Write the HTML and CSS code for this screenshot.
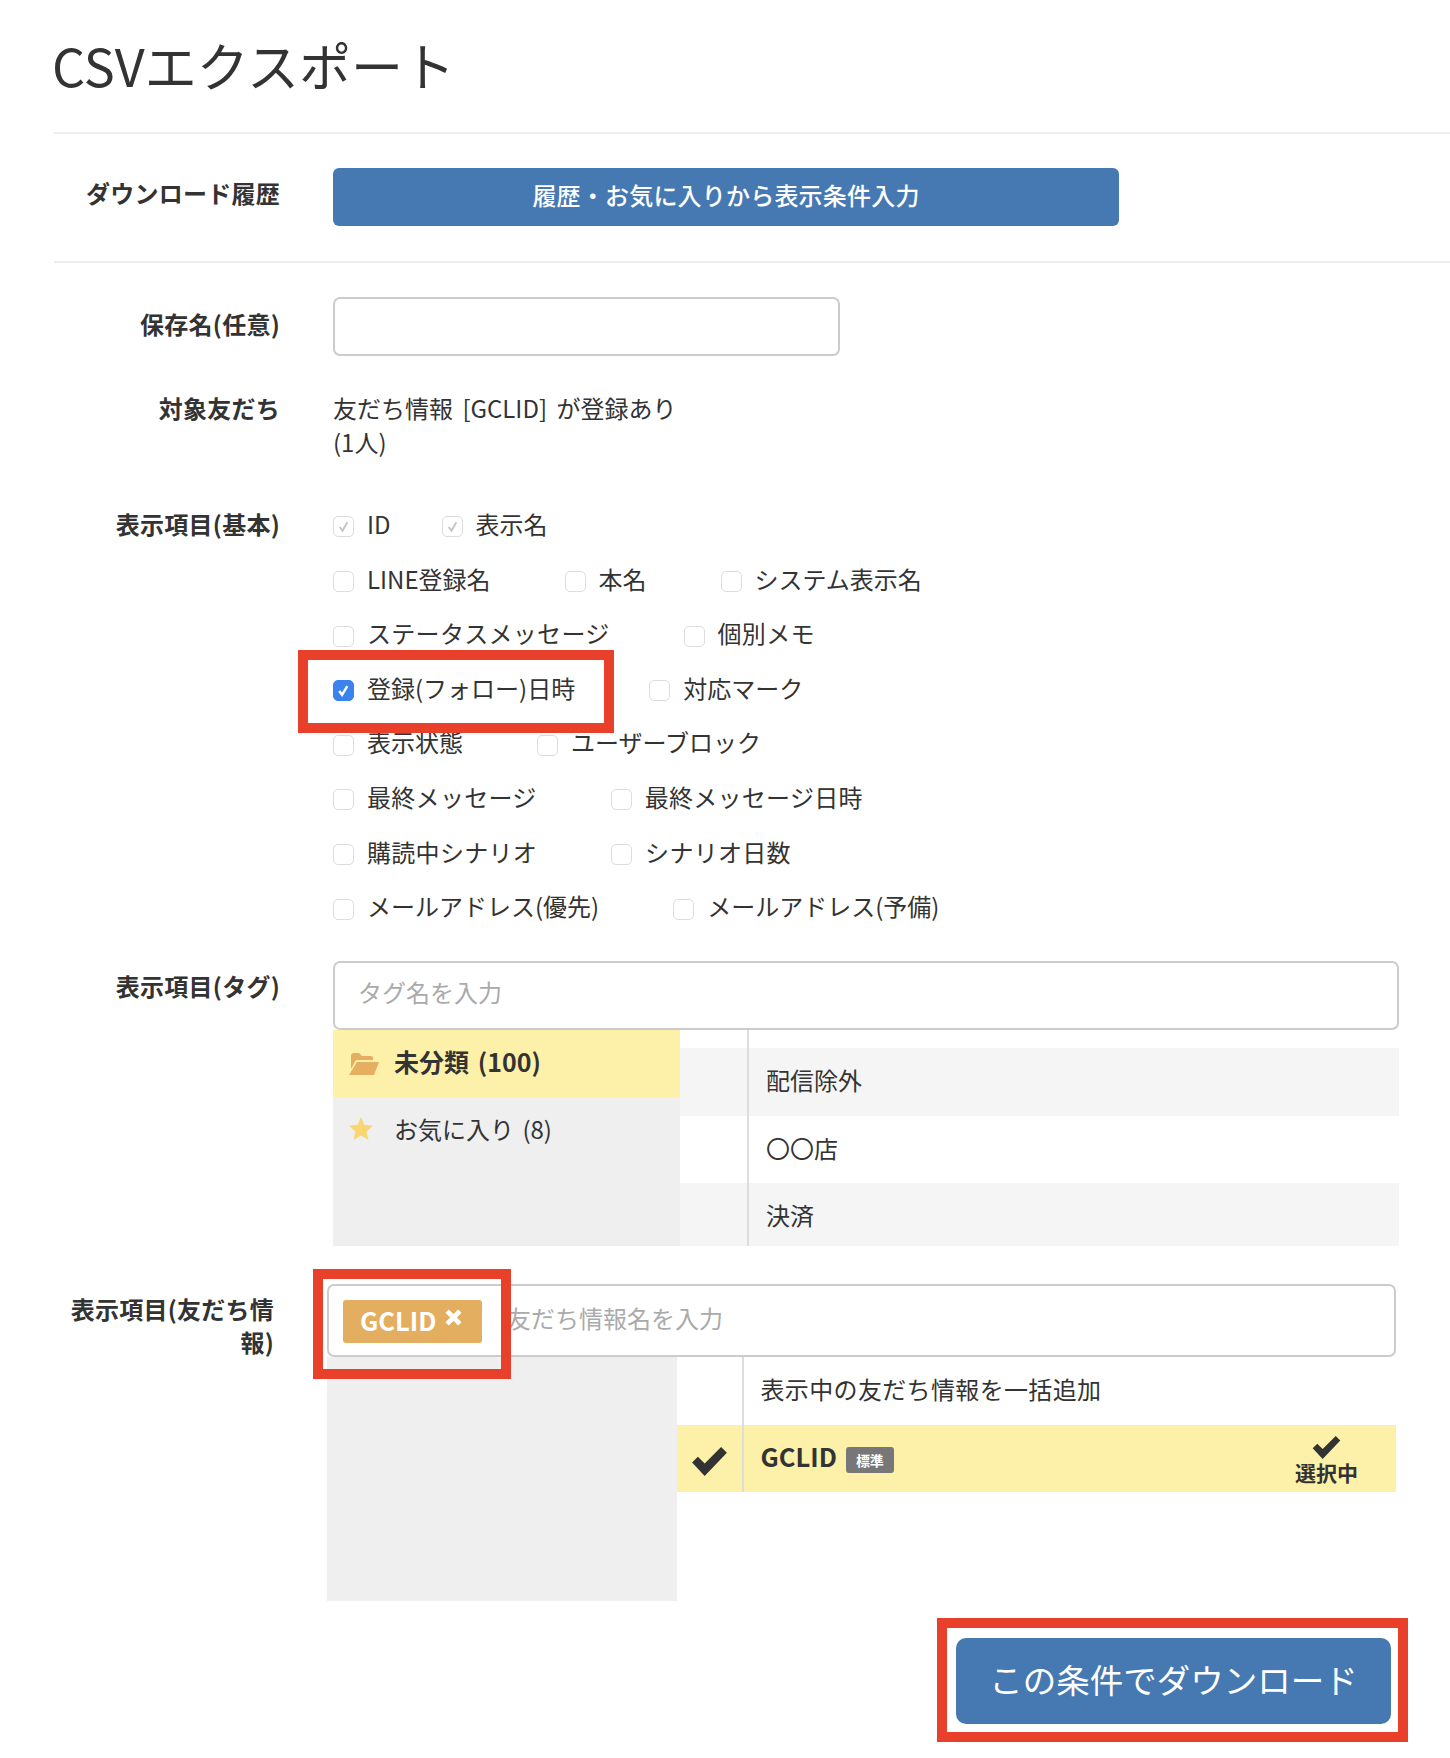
FILE: index.html
```html
<!DOCTYPE html>
<html lang="ja">
<head>
<meta charset="utf-8">
<title>CSVエクスポート</title>
<link rel="stylesheet" href="styles.css">
</head>
<body>
<main class="page">
  <h1 class="title">CSVエクスポート</h1>
  <section class="history">
    <div class="label">ダウンロード履歴</div>
    <button class="btn btn-history" type="button">履歴・お気に入りから表示条件入力</button>
  </section>
  <form class="form">
    <div class="row row-name">
      <label class="label">保存名(任意)</label>
      <input class="input input-name" type="text">
    </div>
    <div class="row row-target">
      <div class="label">対象友だち</div>
      <div class="target-text">友だち情報 [GCLID] が登録あり<br>(1人)</div>
    </div>
    <div class="row row-basic">
      <div class="label">表示項目(基本)</div>
      <div class="checks">
        <div class="check-row tight">
          <span class="check"><span class="cb cb-disabled"><svg viewBox="0 0 20 20"><path d="M6 10.5l3 4 5-9" /></svg></span>ID</span>
          <span class="check"><span class="cb cb-disabled"><svg viewBox="0 0 20 20"><path d="M6 10.5l3 4 5-9" /></svg></span>表示名</span>
        </div>
        <div class="check-row">
          <span class="check"><span class="cb"></span>LINE登録名</span>
          <span class="check"><span class="cb"></span>本名</span>
          <span class="check"><span class="cb"></span>システム表示名</span>
        </div>
        <div class="check-row spaced">
          <span class="check"><span class="cb"></span>ステータスメッセージ</span>
          <span class="check"><span class="cb"></span>個別メモ</span>
        </div>
        <div class="check-row">
          <span class="check"><span class="cb cb-on"><svg viewBox="0 0 20 20"><path d="M5.5 10.5l3 4 5.5-9" /></svg></span>登録(フォロー)日時</span>
          <span class="check"><span class="cb"></span>対応マーク</span>
        </div>
        <div class="check-row">
          <span class="check"><span class="cb"></span>表示状態</span>
          <span class="check"><span class="cb"></span>ユーザーブロック</span>
        </div>
        <div class="check-row spaced">
          <span class="check"><span class="cb"></span>最終メッセージ</span>
          <span class="check"><span class="cb"></span>最終メッセージ日時</span>
        </div>
        <div class="check-row spaced">
          <span class="check"><span class="cb"></span>購読中シナリオ</span>
          <span class="check"><span class="cb"></span>シナリオ日数</span>
        </div>
        <div class="check-row">
          <span class="check"><span class="cb"></span>メールアドレス(優先)</span>
          <span class="check"><span class="cb"></span>メールアドレス(予備)</span>
        </div>
      </div>
    </div>
    <div class="row row-tag">
      <div class="label label-tag">表示項目(タグ)</div>
      <div class="picker">
        <input class="input input-wide" type="text" placeholder="タグ名を入力">
        <div class="panes pane-tag">
          <ul class="side">
            <li class="side-item side-active">
              <svg class="side-icon" viewBox="0 0 30 22"><path d="M2 3a3 3 0 0 1 3-3h5l3 3h9a2 2 0 0 1 2 2v2H7L2 16z" /><path d="M8 9h22l-5 13H0z" /></svg>
              <span>未分類 (100)</span>
            </li>
            <li class="side-item">
              <svg class="side-icon star" viewBox="0 0 24 23"><polygon points="12,0 15.4,8 24,8.8 17.5,14.5 19.5,23 12,18.6 4.5,23 6.5,14.5 0,8.8 8.6,8" /></svg>
              <span>お気に入り (8)</span>
            </li>
          </ul>
          <ul class="list list-tag">
            <li class="list-item">配信除外</li>
            <li class="list-item">〇〇店</li>
            <li class="list-item">決済</li>
          </ul>
        </div>
      </div>
    </div>
    <div class="row row-info">
      <div class="label label-info">表示項目(友だち情報)</div>
      <div class="picker">
        <div class="input tag-field">
          <span class="tag">GCLID<svg class="tag-x" viewBox="0 0 16 16"><path d="M2 2l12 12M14 2L2 14" /></svg></span>
          <input class="tag-input" type="text" placeholder="友だち情報名を入力">
        </div>
        <div class="panes pane-info">
          <div class="side side-info"></div>
          <ul class="list list-info">
            <li class="info-item info-all"><span class="info-mark"></span><span class="info-text">表示中の友だち情報を一括追加</span></li>
            <li class="info-item info-selected">
              <span class="info-mark"><svg class="tick tick-big" viewBox="0 0 36 30"><path d="M0 16l6-6 7 7L30 0l6 6-23 24z" /></svg></span>
              <span class="info-text"><b class="info-name">GCLID</b><span class="badge">標準</span></span>
              <span class="selected-note"><svg class="tick tick-small" viewBox="0 0 36 30"><path d="M0 16l6-6 7 7L30 0l6 6-23 24z" /></svg>選択中</span>
            </li>
          </ul>
        </div>
      </div>
    </div>
    <div class="submit-row">
      <button class="btn btn-submit" type="button">この条件でダウンロード</button>
    </div>
  </form>
  <div class="mark mark-follow"></div>
  <div class="mark mark-tag"></div>
  <div class="mark mark-submit"></div>
</main>
</body>
</html>
```

FILE: styles.css
```css
* { box-sizing: border-box; }
html, body { margin: 0; padding: 0; background: #fff; }
body {
  width: 1450px;
  height: 1758px;
  overflow: hidden;
  color: #333;
  font-family: "Noto Sans CJK JP", "Noto Sans", sans-serif;
  font-size: 24px;
}
ul { list-style: none; margin: 0; padding: 0; }
.page { position: relative; padding-left: 53px; height: 1758px; }

.title {
  margin: 0 0 0 1px;
  padding: 33px 0 0;
  font-size: 52px;
  line-height: 64px;
  font-weight: 400;
  text-indent: -2px;
  border-bottom: 2px solid #eee;
  height: 134px;
}
.history {
  display: flex;
  align-items: center;
  gap: 53px;
  margin-left: 1px;
  padding: 34px 0 35px;
  border-bottom: 2px solid #eee;
  height: 129px;
}
.label {
  flex: none;
  width: 227px;
  text-align: right;
  font-weight: 700;
  line-height: 33px;
  letter-spacing: .25px;
}
.history .label { width: 226px; margin-top: -9px; }
.btn {
  border: 0;
  color: #fff;
  background: #4679b2;
  font-family: inherit;
  border-radius: 6px;
}
.btn-history { width: 786px; height: 58px; padding: 0 0 6px; font-size: 24px; font-weight: 500; letter-spacing: .2px; }

.form { padding-top: 34px; }
.row { display: flex; gap: 53px; }
.input {
  border: 2px solid #ccc;
  border-radius: 7px;
  background: #fff;
  font-family: inherit;
  font-size: 24px;
  outline: none;
}
.input::placeholder { color: #aaa; }
.row-name { align-items: center; height: 59px; }
.row-name .label { margin-top: -7px; }
.input-name { width: 507px; height: 59px; }
.row-target { margin-top: 35px; height: 69px; }
.target-text { line-height: 34px; word-spacing: 4px; }
.row-target .label { line-height: 34px; }

.row-basic { margin-top: 36.7px; height: 438px; }
.row-basic .label { line-height: 54.6px; }
.checks { display: flex; flex-direction: column; }
.check-row { display: flex; height: 54.6px; align-items: center; gap: 74px; }
.check-row.tight { gap: 51px; }
.check-row.spaced { letter-spacing: .3px; }
.check { display: flex; align-items: center; white-space: nowrap; line-height: 34px; }
.cb {
  flex: none;
  width: 21px;
  height: 21px;
  margin: 6px 13px 0 0;
  border: 1.5px solid #dcdcdc;
  border-radius: 5px;
  background: #fff;
  display: block;
}
.cb svg { display: block; width: 100%; height: 100%; fill: none; stroke-width: 2; }
.cb-disabled svg { stroke: #c4c4c4; }
.cb-on { background: #3a82ee; border-color: #3a82ee; }
.cb-on svg { stroke: #fff; stroke-width: 2.6; }

.row-tag { margin-top: 26.8px; }
.label-tag { margin-top: 8px; }
.picker { display: flex; flex-direction: column; flex: none; }
.row-tag .picker { width: 1066px; }
.input-wide { width: 100%; height: 69px; padding: 0 0 9px 23px; }
.panes { display: flex; }
.pane-tag { height: 216px; margin-top: 0; overflow: hidden; }
.side { flex: none; width: 347px; background: #efefef; }
.side-item {
  display: flex;
  align-items: center;
  height: 67px;
  padding: 0 0 4px 16px;
  line-height: 33px;
  word-spacing: 3px;
}
.side-active { background: #fdf1a9; font-weight: 700; font-size: 25px; }
.side-icon { width: 30px; height: 22px; margin: 4px 15px 0 0; fill: #e5ae60; flex: none; }
.side-icon.star { width: 24px; height: 23px; margin: 0 21px 0 0; fill: #f9d66f; }
.list { flex: 1; }
.list-tag {
  padding-top: 18px;
  background-image: linear-gradient(#ddd, #ddd);
  background-repeat: no-repeat;
  background-size: 2px 100%;
  background-position: 67px 0;
}
.list-item {
  height: 67.5px;
  padding-left: 86px;
  line-height: 63px;
  position: relative;
}
.list-item:nth-child(odd) { background: #f5f5f5; }
.list-item::before {
  content: "";
  position: absolute;
  left: 67px;
  top: 0;
  bottom: 0;
  width: 2px;
  background: #ddd;
}

.row-info { margin-top: 38px; }
.label-info { width: 221px; margin-top: 8px; }
.row-info .picker { width: 1069px; }
.tag-field { display: flex; align-items: center; height: 73px; padding-left: 14px; }
.tag {
  flex: none;
  display: flex;
  align-items: center;
  width: 139px;
  height: 43px;
  margin-top: 2px;
  padding: 0 0 5px 17px;
  background: #e4ae60;
  color: #fff;
  border-radius: 3px;
  font-weight: 700;
  font-size: 25.5px;
}
.tag-x { width: 17px; height: 17px; margin: -3px 0 0 9px; fill: none; stroke: #fff; stroke-width: 4.5; }
.tag-input {
  flex: 1;
  min-width: 0;
  border: 0;
  outline: none;
  background: transparent;
  padding: 0 0 6px 25px;
  font-family: inherit;
  font-size: 24px;
}
.tag-input::placeholder { color: #aaa; }
.pane-info { height: 244px; }
.side-info { width: 349.5px; }
.info-item {
  display: flex;
  align-items: stretch;
  height: 68px;
}
.info-mark {
  flex: none;
  width: 67px;
  display: flex;
  justify-content: center;
  align-items: center;
  border-right: 2px solid #ddd;
}
.info-text { padding-left: 17px; flex: 1; display: flex; align-items: center; }
.info-all .info-text { padding-bottom: 6px; letter-spacing: .35px; }
.info-selected { height: 67px; background: #fdf1a9; }
.info-name { font-size: 25.5px; font-weight: 700; margin-top: -6px; }
.badge {
  margin: 2px 0 0 9px;
  width: 48px;
  height: 26px;
  background: #777;
  border-radius: 3px;
  color: #fff;
  font-size: 14px;
  line-height: 26px;
  text-align: center;
  font-weight: 700;
}
.tick { fill: #333; display: block; }
.tick-big { width: 35px; height: 29px; margin-top: 5px; }
.tick-small { width: 29px; height: 23px; }
.selected-note {
  display: flex;
  flex-direction: column;
  align-items: center;
  justify-content: flex-end;
  margin: 10px 38px 0 0;
  font-size: 21px;
  line-height: 26px;
  font-weight: 700;
  height: 50px;
}
.submit-row { display: flex; padding: 37px 0 0 903px; }
.btn-submit { width: 435px; height: 86px; font-size: 33.5px; border-radius: 10px; padding: 0 0 6px; }

.mark { position: absolute; border: 10px solid #e8402a; pointer-events: none; }
.mark-follow { left: 298px; top: 650px; width: 316px; height: 83px; }
.mark-tag { left: 313px; top: 1269px; width: 198px; height: 110px; }
.mark-submit { left: 937px; top: 1618px; width: 471px; height: 124px; }
```
